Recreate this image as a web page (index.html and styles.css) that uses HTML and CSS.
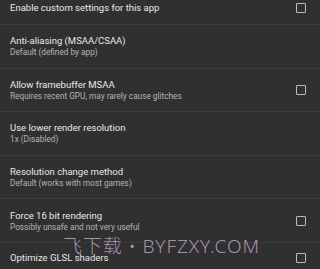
FILE: index.html
```html
<!DOCTYPE html>
<html>
<head>
<meta charset="utf-8">
<link rel="stylesheet" href="styles.css">
</head>
<body>
<div class="list">
  <div class="row single first">
    <div class="text"><div class="title">Enable custom settings for this app</div></div>
    <span class="check"></span>
  </div>
  <div class="row">
    <div class="text"><div class="title">Anti-aliasing (MSAA/CSAA)</div><div class="sub">Default (defined by app)</div></div>
  </div>
  <div class="row">
    <div class="text"><div class="title">Allow framebuffer MSAA</div><div class="sub">Requires recent GPU, may rarely cause glitches</div></div>
    <span class="check"></span>
  </div>
  <div class="row">
    <div class="text"><div class="title">Use lower render resolution</div><div class="sub">1x (Disabled)</div></div>
  </div>
  <div class="row">
    <div class="text"><div class="title">Resolution change method</div><div class="sub">Default (works with most games)</div></div>
  </div>
  <div class="row">
    <div class="text"><div class="title">Force 16 bit rendering</div><div class="sub">Possibly unsafe and not very useful</div></div>
    <span class="check"></span>
  </div>
  <div class="row single">
    <div class="text"><div class="title">Optimize GLSL shaders</div></div>
    <span class="check"></span>
  </div>
</div>
<div class="watermark">飞下载 • BYFZXY.COM</div>
</body>
</html>
```
FILE: styles.css
```css
html, body {
  margin: 0;
  padding: 0;
  background: #303030;
  width: 320px;
  height: 269px;
  overflow: hidden;
  font-family: Roboto, "Noto Sans", sans-serif;
}
.list {
  display: flex;
  flex-direction: column;
  margin-top: -8px;
}
.row {
  display: flex;
  align-items: center;
  height: 43.6px;
  box-sizing: border-box;
  padding: 0 14px 0 10px;
  border-top: 1px solid #3b3b3b;
  flex-shrink: 0;
}
.row.first {
  border-top: none;
  height: 32px;
}
.row.single {
  height: 32px;
}
.text {
  flex: 1;
  display: flex;
  flex-direction: column;
  min-width: 0;
}
.title {
  font-size: 9.5px;
  line-height: 12px;
  color: #e8e8e8;
  white-space: nowrap;
}
.sub {
  font-size: 8.25px;
  line-height: 10px;
  color: #b4b4b4;
  white-space: nowrap;
}
.check {
  width: 10px;
  height: 10px;
  box-sizing: border-box;
  border: 1.5px solid #bdbdbd;
  border-radius: 1px;
  flex-shrink: 0;
}
.watermark {
  position: absolute;
  left: 63px;
  top: 234px;
  font-family: "Noto Sans", "Noto Sans CJK SC", sans-serif;
  font-weight: 300;
  font-size: 19px;
  line-height: 24px;
  letter-spacing: 0.9px;
  color: rgba(190, 165, 198, 0.85);
  white-space: nowrap;
}
```
